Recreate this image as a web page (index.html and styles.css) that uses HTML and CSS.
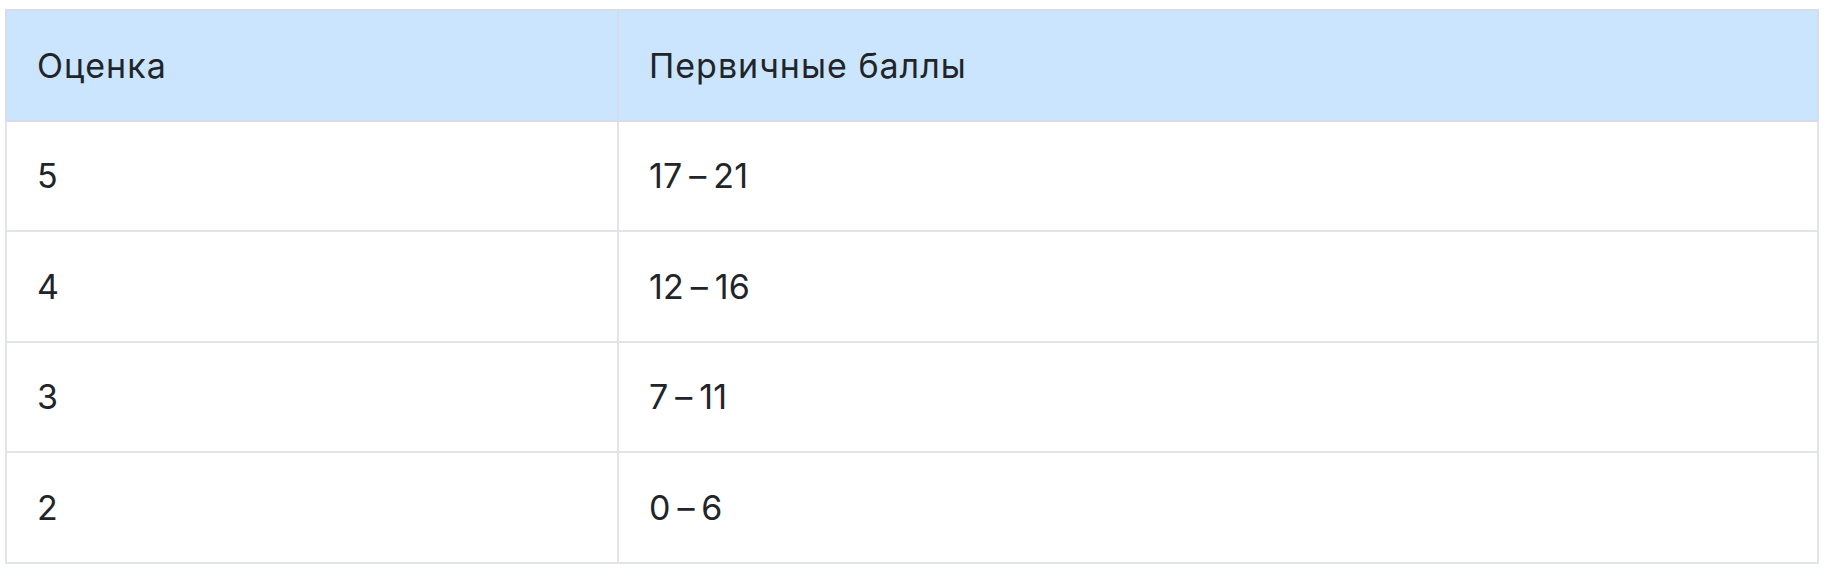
FILE: index.html
```html
<!DOCTYPE html>
<html lang="ru">
<head>
<meta charset="utf-8">
<title>Оценка</title>
<link rel="stylesheet" href="styles.css">
</head>
<body>
<table class="score-table">
  <colgroup>
    <col class="col-grade">
    <col class="col-points">
  </colgroup>
  <thead>
    <tr class="head-row">
      <th>Оценка</th>
      <th>Первичные баллы</th>
    </tr>
  </thead>
  <tbody>
    <tr><td>5</td><td>17 – 21</td></tr>
    <tr><td>4</td><td>12 – 16</td></tr>
    <tr><td>3</td><td>7 – 11</td></tr>
    <tr><td>2</td><td>0 – 6</td></tr>
  </tbody>
</table>
</body>
</html>
```
FILE: styles.css
```css
html, body {
  margin: 0;
  padding: 0;
  background: #ffffff;
}

body {
  padding: 9px 7px 0 5px;
  font-family: "Inter", "Noto Sans", sans-serif;
  color: #212529;
}

.score-table {
  width: 1814px;
  border-collapse: collapse;
  table-layout: fixed;
  font-size: 34px;
  letter-spacing: 1px;
}

.col-grade {
  width: 612px;
}

.score-table th,
.score-table td {
  height: 110.5px;
  padding: 0 30px;
  border: 2px solid #e1e4e8;
  text-align: left;
  vertical-align: middle;
  font-weight: 400;
  box-sizing: border-box;
}

.score-table td {
  letter-spacing: 0.2px;
  word-spacing: -3px;
}

.head-row th {
  background: #cce5ff;
  border-color: #d6dde6;
}
```
